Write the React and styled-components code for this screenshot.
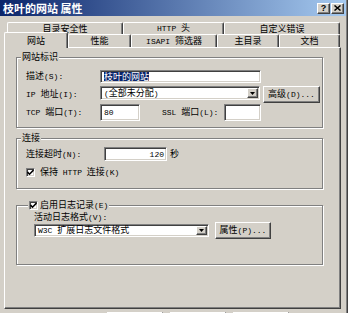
import React from "react";
import styled, { createGlobalStyle, css } from "styled-components";

const FACE = "#d4d0c8";
const CJK = `"Noto Sans CJK SC", "Noto Sans", sans-serif`;

const Global = createGlobalStyle`
  html, body { margin: 0; padding: 0; background: ${FACE}; }
  body { font-family: ${CJK}; font-size: 9px; line-height: 10px; color: #000; }
  * { box-sizing: border-box; }
`;

const raised = css`
  background: ${FACE};
  border-top: 1px solid #fff;
  border-left: 1px solid #fff;
  border-right: 1px solid #404040;
  border-bottom: 1px solid #404040;
  box-shadow: inset -1px -1px 0 #808080;
`;

const sunken = css`
  background: #fff;
  border-top: 1px solid #808080;
  border-left: 1px solid #808080;
  border-right: 1px solid #fff;
  border-bottom: 1px solid #fff;
  box-shadow: inset 1px 1px 0 #404040, inset -1px -1px 0 ${FACE};
`;

const Window = styled.div`
  width: 348px;
  height: 313px;
  overflow: hidden;
  display: flex;
  flex-direction: column;
  background: ${FACE};
  border-right: 1px solid #404040;
  box-shadow: inset -1px 0 0 #808080;
`;

const TitleBar = styled.div`
  flex: none;
  width: 346px;
  height: 16px;
  display: flex;
  align-items: center;
  justify-content: space-between;
  padding: 0 2px 0 3px;
  background: linear-gradient(to right, #0a246a, #a6caf0);
  color: #fff;
  font-weight: bold;
  font-size: 11px;
  line-height: 16px;
  white-space: nowrap;
`;

const CaptionButtons = styled.div`
  display: flex;
  gap: 1px;
`;

const CaptionButton = styled.div`
  ${raised};
  width: 13px;
  height: 11px;
  display: flex;
  align-items: center;
  justify-content: center;
  color: #000;
  font-family: "Liberation Sans", sans-serif;
  font-weight: bold;
  font-size: 9px;
  line-height: 9px;
`;

const TabArea = styled.div`
  flex: none;
  margin-top: 6px;
  display: flex;
  flex-direction: column;
`;

const TabRow = styled.div`
  display: flex;
  height: ${(p) => p.$h}px;
  margin-left: ${(p) => p.$x}px;
`;

const Tab = styled.div`
  width: ${(p) => p.$w}px;
  flex: none;
  display: flex;
  align-items: center;
  justify-content: center;
  background: ${FACE};
  border-top: 1px solid #fff;
  border-left: 1px solid #fff;
  border-right: 1px solid #404040;
  box-shadow: inset -1px 0 0 #808080;
  border-radius: 2px 2px 0 0;
  white-space: nowrap;
  ${(p) =>
    p.$active &&
    css`
      position: relative;
      z-index: 2;
      margin-top: -2px;
      margin-bottom: -1px;
    `}
`;

const Panel = styled.div`
  flex: none;
  margin-left: 4px;
  width: 337px;
  height: 262px;
  border-top: 1px solid #fff;
  border-left: 1px solid #fff;
  border-right: 1px solid #404040;
  border-bottom: 1px solid #404040;
  box-shadow: inset -1px -1px 0 #808080;
  display: flex;
  flex-direction: column;
  padding: 9px 0 0 11px;
`;

const Group = styled.div`
  position: relative;
  flex: none;
  width: 307px;
  height: ${(p) => p.$h}px;
  margin-top: ${(p) => p.$mt || 0}px;
  border: 1px solid #808080;
  box-shadow: 1px 1px 0 #fff, inset 1px 1px 0 #fff;
  padding: ${(p) => p.$pad};
  display: flex;
  flex-direction: column;
`;

const Legend = styled.div`
  position: absolute;
  top: -6px;
  left: ${(p) => p.$x}px;
  height: 10px;
  padding: 0 1px;
  background: ${FACE};
  display: flex;
  align-items: center;
  gap: 2px;
  white-space: nowrap;
`;

const Row = styled.div`
  display: flex;
  align-items: ${(p) => p.$align || "center"};
  height: ${(p) => p.$h}px;
  margin-top: ${(p) => p.$mt || 0}px;
  flex: none;
`;

const Label = styled.span`
  flex: none;
  width: ${(p) => (p.$w ? `${p.$w}px` : "auto")};
  margin-left: ${(p) => p.$ml || 0}px;
  white-space: nowrap;
  ${(p) => p.$selfTop && css`align-self: center;`}
`;

const Field = styled.div`
  ${sunken};
  flex: none;
  width: ${(p) => p.$w}px;
  height: ${(p) => p.$h}px;
  margin-left: ${(p) => p.$ml || 0}px;
  display: flex;
  align-items: ${(p) => (p.$top ? "flex-start" : "center")};
  justify-content: ${(p) => (p.$right ? "flex-end" : "flex-start")};
  padding: ${(p) => (p.$top ? "2px 3px 0" : "0 2px 0 3px")};
  white-space: nowrap;
  overflow: hidden;
`;

const SelectBox = styled(Field)`
  padding: 0 1px 0 3px;
`;

const DropButton = styled.div`
  ${raised};
  margin-left: auto;
  width: 11px;
  height: calc(100% - 2px);
  display: flex;
  align-items: center;
  justify-content: center;
`;

const Highlight = styled.span`
  background: #0a246a;
  color: #fff;
  line-height: 9px;
`;

const Button = styled.div`
  ${raised};
  flex: none;
  width: ${(p) => p.$w}px;
  height: ${(p) => p.$h}px;
  margin-left: ${(p) => p.$ml || 0}px;
  display: flex;
  align-items: center;
  justify-content: center;
  white-space: nowrap;
`;

const CheckBox = styled.div`
  ${sunken};
  flex: none;
  width: 9px;
  height: 9px;
  display: flex;
  align-items: center;
  justify-content: center;
`;

const CheckRow = styled.div`
  display: flex;
  align-items: center;
  gap: 5px;
  height: 10px;
  margin-top: ${(p) => p.$mt || 0}px;
  white-space: nowrap;
`;

const Unit = styled.span`
  margin-left: 3px;
`;

const BottomRow = styled.div`
  flex: none;
  display: flex;
  gap: 7px;
  margin-top: 3px;
  padding-left: 107px;
`;

const Lat = styled.span`
  font-family: "Liberation Mono", monospace;
  font-size: 8px;
`;

const TextRun = styled.span`
  white-space: pre;
`;

function Txt({ children }) {
  const parts = String(children)
    .split(/([\x20-\x7e]+)/)
    .filter(Boolean);
  return (
    <TextRun>
      {parts.map((p, i) =>
        /^[\x20-\x7e]+$/.test(p) ? (
          <Lat key={i}>{p}</Lat>
        ) : (
          <React.Fragment key={i}>{p}</React.Fragment>
        )
      )}
    </TextRun>
  );
}

const Check = () => (
  <svg width="7" height="7" viewBox="0 0 7 7">
    <polyline points="0.5,3 2.5,5.2 6.5,1" fill="none" stroke="#000" strokeWidth="1.6" />
  </svg>
);

const Arrow = () => (
  <svg width="5" height="3" viewBox="0 0 5 3">
    <polygon points="0,0 5,0 2.5,3" fill="#000" />
  </svg>
);

const CloseGlyph = () => (
  <svg width="7" height="6" viewBox="0 0 7 6">
    <path d="M0.5 0.5 L6.5 5.5 M6.5 0.5 L0.5 5.5" stroke="#000" strokeWidth="1.5" />
  </svg>
);

const backTabs = [
  { t: "目录安全性", w: 116 },
  { t: "HTTP 头", w: 101 },
  { t: "自定义错误", w: 116 },
];

const frontTabs = [
  { t: "网站", w: 64, active: true },
  { t: "性能", w: 63 },
  { t: "ISAPI 筛选器", w: 86 },
  { t: "主目录", w: 62 },
  { t: "文档", w: 61 },
];

export default function App() {
  return (
    <>
      <Global />
      <Window>
        <TitleBar>
          <span>枝叶的网站 属性</span>
          <CaptionButtons>
            <CaptionButton>?</CaptionButton>
            <CaptionButton>
              <CloseGlyph />
            </CaptionButton>
          </CaptionButtons>
        </TitleBar>

        <TabArea>
          <TabRow $x={7} $h={12}>
            {backTabs.map((t) => (
              <Tab key={t.t} $w={t.w}>
                <Txt>{t.t}</Txt>
              </Tab>
            ))}
          </TabRow>
          <TabRow $x={4} $h={13}>
            {frontTabs.map((t) => (
              <Tab key={t.t} $w={t.w} $active={t.active}>
                <Txt>{t.t}</Txt>
              </Tab>
            ))}
          </TabRow>
        </TabArea>

        <Panel>
          <Group $h={71} $pad="12px 0 0 9px">
            <Legend $x={4}>网站标识</Legend>
            <Row $h={13}>
              <Label $w={74}>
                <Txt>描述(S):</Txt>
              </Label>
              <Field $w={161} $h={13}>
                <Highlight>枝叶的网站</Highlight>
              </Field>
            </Row>
            <Row $h={17} $mt={3} $align="flex-start">
              <Label $w={74} $selfTop>
                <Txt>IP 地址(I):</Txt>
              </Label>
              <SelectBox $w={160} $h={14}>
                <Txt>(全部未分配)</Txt>
                <DropButton>
                  <Arrow />
                </DropButton>
              </SelectBox>
              <Button $w={57} $h={17} $ml={3}>
                <Txt>高级(D)...</Txt>
              </Button>
            </Row>
            <Row $h={17} $mt={1}>
              <Label $w={74}>
                <Txt>TCP 端口(T):</Txt>
              </Label>
              <Field $w={40} $h={17} $top>
                <Txt>80</Txt>
              </Field>
              <Label $w={62} $ml={22}>
                <Txt>SSL 端口(L):</Txt>
              </Label>
              <Field $w={37} $h={17} />
            </Row>
          </Group>

          <Group $h={51} $mt={10} $pad="8px 0 0 9px">
            <Legend $x={4}>连接</Legend>
            <Row $h={14}>
              <Label $w={78}>
                <Txt>连接超时(N):</Txt>
              </Label>
              <Field $w={63} $h={14} $right>
                <Txt>120</Txt>
              </Field>
              <Unit>秒</Unit>
            </Row>
            <CheckRow $mt={6}>
              <CheckBox>
                <Check />
              </CheckBox>
              <Txt>保持 HTTP 连接(K)</Txt>
            </CheckRow>
          </Group>

          <Group $h={60} $mt={16} $pad="6px 0 0 17px">
            <Legend $x={11}>
              <CheckBox>
                <Check />
              </CheckBox>
              <Txt>启用日志记录(E)</Txt>
            </Legend>
            <Row $h={10}>
              <Label>
                <Txt>活动日志格式(V):</Txt>
              </Label>
            </Row>
            <Row $h={17}>
              <SelectBox $w={175} $h={13}>
                <Txt>W3C 扩展日志文件格式</Txt>
                <DropButton>
                  <Arrow />
                </DropButton>
              </SelectBox>
              <Button $w={56} $h={17} $ml={6}>
                <Txt>属性(P)...</Txt>
              </Button>
            </Row>
          </Group>
        </Panel>

        <BottomRow>
          <Button $w={56} $h={18} />
          <Button $w={56} $h={18} />
          <Button $w={56} $h={18} />
        </BottomRow>
      </Window>
    </>
  );
}
